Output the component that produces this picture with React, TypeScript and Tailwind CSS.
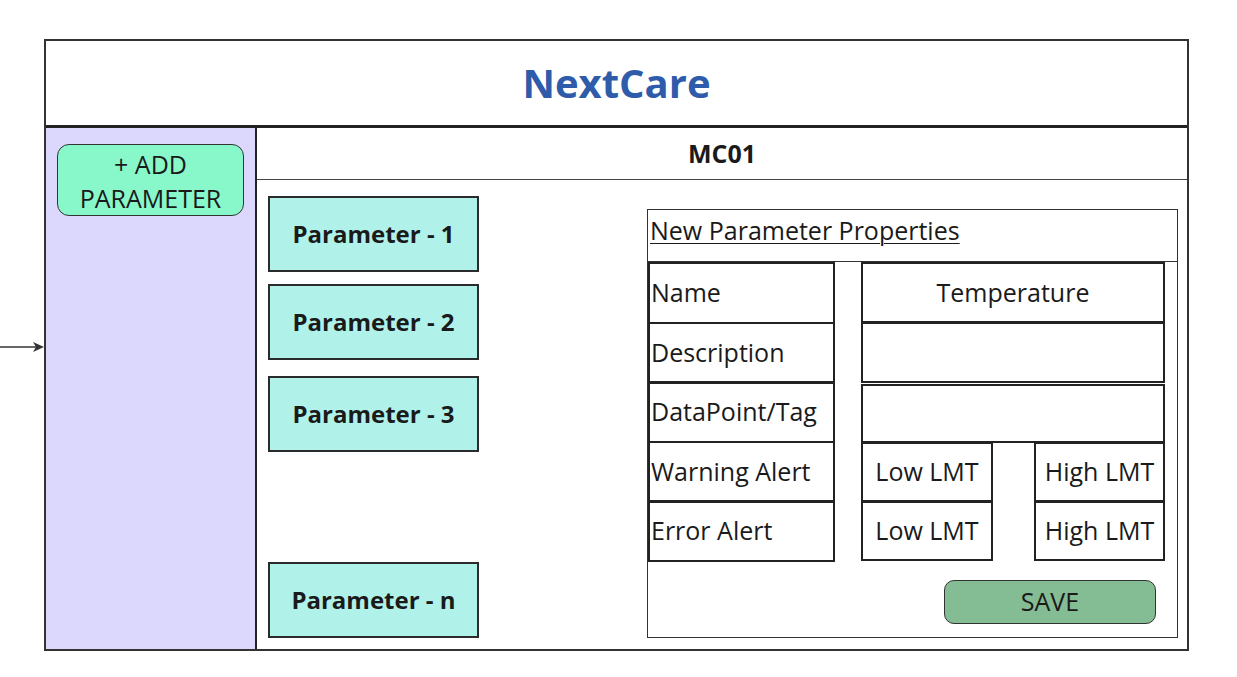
const font = { fontFamily: '"Open Sans", "Noto Sans", sans-serif' };

function ParamBox({ label, className = '' }: { label: string; className?: string }) {
  return (
    <div
      className={`h-[76px] w-[211px] flex items-center justify-center bg-[#b0f2e9] border-2 border-[#2b2b2b] text-[24px] font-bold text-[#1a1a1a] ${className}`}
    >
      {label}
    </div>
  );
}

function LabelCell({ text }: { text: string }) {
  return (
    <div className="h-[62px] w-[187px] flex items-center pl-[1px] border-2 border-[#222] -mt-[2.5px] first:mt-0 text-[25px] text-[#1a1a1a]">
      {text}
    </div>
  );
}

function ValueCell({ text = '', className = '' }: { text?: string; className?: string }) {
  return (
    <div
      className={`flex items-center justify-center border-2 border-[#222] text-[25px] text-[#1a1a1a] ${className}`}
    >
      {text}
    </div>
  );
}

export default function App() {
  return (
    <div className="min-h-screen bg-white pt-[39px]" style={font}>
      <div className="flex items-start">
        {/* incoming arrow */}
        <div className="w-[44px] h-[612px] flex items-center">
          <svg width="44" height="16" viewBox="0 0 44 16" className="mt-[4px]">
            <line x1="0" y1="8" x2="38" y2="8" stroke="#333" strokeWidth="1.5" />
            <path d="M33 3 L44 8 L33 13 L36 8 Z" fill="#333" />
          </svg>
        </div>

        <div className="w-[1145px] h-[612px] border-2 border-[#333] flex flex-col">
          <header className="h-[87px] flex items-center justify-center border-b-[3px] border-[#222]">
            <h1 className="text-[40px] font-bold text-[#2e5caa]">NextCare</h1>
          </header>

          <div className="flex flex-1 min-h-0">
            <aside className="w-[211px] bg-[#dcd8fd] border-r-2 border-[#222] pl-[11px] pt-[16px]">
              <button className="w-[187px] h-[72px] pt-[2px] rounded-[12px] bg-[#88f8ca] border-[1.5px] border-[#333] text-[25px] leading-[34px] text-[#1a1a1a]">
                + ADD
                <br />
                PARAMETER
              </button>
            </aside>

            <main className="flex-1 flex flex-col">
              <div className="h-[52px] flex items-center justify-center border-b-[1.5px] border-[#444] text-[25px] font-bold text-[#1a1a1a]">
                MC01
              </div>

              <div className="flex-1 flex pl-[11px] pr-[9px] pt-[16px] pb-[11px]">
                <div className="flex flex-col">
                  <ParamBox label="Parameter - 1" />
                  <ParamBox label="Parameter - 2" className="mt-[12px]" />
                  <ParamBox label="Parameter - 3" className="mt-[16px]" />
                  <ParamBox label="Parameter - n" className="mt-auto" />
                </div>

                <section className="ml-auto mt-[13px] w-[531px] border-[1.5px] border-[#333] flex flex-col">
                  <div className="h-[52px] border-b-[1.5px] border-[#333] pl-[2px] pt-[2px]">
                    <span className="text-[25px] underline underline-offset-[3px] decoration-1 text-[#1a1a1a]">
                      New Parameter Properties
                    </span>
                  </div>

                  <div className="flex">
                    <div className="flex flex-col">
                      <LabelCell text="Name" />
                      <LabelCell text="Description" />
                      <LabelCell text="DataPoint/Tag" />
                      <LabelCell text="Warning Alert" />
                      <LabelCell text="Error Alert" />
                    </div>

                    <div className="ml-[26px] w-[304px] flex flex-col">
                      <ValueCell text="Temperature" className="h-[61px]" />
                      <ValueCell className="h-[61px] -mt-[1px]" />
                      <ValueCell className="h-[59px] mt-[1px]" />
                      <div className="flex justify-between -mt-[1px]">
                        <ValueCell text="Low LMT" className="h-[60px] w-[132px]" />
                        <ValueCell text="High LMT" className="h-[60px] w-[131px]" />
                      </div>
                      <div className="flex justify-between -mt-[1px]">
                        <ValueCell text="Low LMT" className="h-[60px] w-[132px]" />
                        <ValueCell text="High LMT" className="h-[60px] w-[131px]" />
                      </div>
                    </div>
                  </div>

                  <div className="flex justify-end pr-[21px] mt-[18px]">
                    <button className="w-[212px] h-[44px] rounded-[10px] bg-[#84bc94] border-[1.5px] border-[#333] text-[25px] text-[#1a1a1a]">
                      SAVE
                    </button>
                  </div>
                </section>
              </div>
            </main>
          </div>
        </div>
      </div>
    </div>
  );
}
